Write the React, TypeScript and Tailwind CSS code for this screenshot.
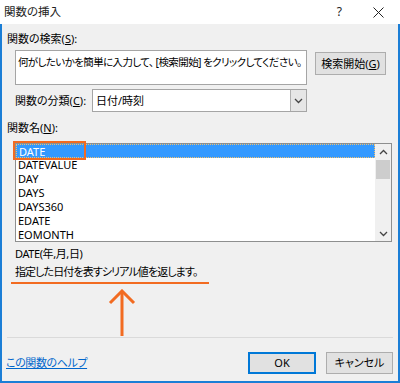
import React from "react";

const functions = ["DATE", "DATEVALUE", "DAY", "DAYS", "DAYS360", "EDATE", "EOMONTH"];

const Chevron: React.FC<{up?: boolean; className?: string}> = ({up, className}) => (
    <svg width="9" height="6" viewBox="0 0 9 6" className={className}>
        <path d={up ? "M1 5 L4.5 1.5 L8 5" : "M1 1 L4.5 4.5 L8 1"} fill="none" stroke="#444" strokeWidth="1.3"/>
    </svg>
);

const App: React.FC = () => {
    return (
        <div
            className="w-[400px] h-[383px] bg-white flex flex-col overflow-hidden text-[11px] text-black leading-[16px] [font-feature-settings:'palt']"
            style={{fontFamily: "'Noto Sans', 'Noto Sans CJK JP', sans-serif"}}
        >
            {/* title bar */}
            <div className="h-[24px] flex items-center pl-[4px] shrink-0">
                <span className="text-[11.5px] text-[#222]">関数の挿入</span>
                <span className="ml-auto mr-[31px] text-[12px] text-[#222]">?</span>
                <svg width="11" height="11" viewBox="0 0 11 11" className="mr-[16px]">
                    <path d="M0.5 0.5 L10.5 10.5 M10.5 0.5 L0.5 10.5" stroke="#222" strokeWidth="1"/>
                </svg>
            </div>

            {/* body */}
            <div className="flex-1 bg-[#f0f0f0] border-x-2 border-b-2 border-[#1b7ed6] pl-[5px] pr-[5px] flex flex-col relative">
                <div className="mt-[7px]">関数の検索(<span className="underline">S</span>):</div>

                <div className="flex mt-[3px] ml-[8px]">
                    <div className="w-[292px] h-[35px] shrink-0 overflow-hidden bg-white border border-[#a5a5a5] px-[2px] pt-[3px] whitespace-nowrap text-[10.5px] tracking-[-0.6px]">
                        何がしたいかを簡単に入力して、 [検索開始] をクリックしてください。
                    </div>
                    <button className="ml-[8px] mt-[2px] w-[71px] h-[23px] shrink-0 bg-[#e1e1e1] border border-[#adadad] flex items-center justify-center whitespace-nowrap">
                        検索開始(<span className="underline">G</span>)
                    </button>
                </div>

                <div className="flex items-center mt-[4px] ml-[8px]">
                    <div className="w-[77px]">関数の分類(<span className="underline">C</span>):</div>
                    <div className="w-[215px] h-[23px] bg-white border border-[#a5a5a5] flex items-center">
                        <span className="pl-[3px] flex-1">日付/時刻</span>
                        <div className="w-[16px] h-full bg-[#e6e6e6] border-l border-[#b0b0b0] flex items-center justify-center">
                            <Chevron/>
                        </div>
                    </div>
                </div>

                <div className="mt-[8px]">関数名(<span className="underline">N</span>):</div>

                <div className="mt-[7px] ml-[8px] w-[377px] h-[99px] bg-white border border-[#8e8f8f] flex relative">
                    <div className="flex-1 flex flex-col">
                        {functions.map((name, i) => (
                            <div
                                key={name}
                                className={`h-[14px] leading-[14px] pl-[2px] ${
                                    i === 0 ? "bg-[#3399ff] text-white border border-dotted border-[#f0c070]" : ""
                                }`}
                            >
                                {name}
                            </div>
                        ))}
                    </div>
                    <div className="w-[16px] bg-[#f0f0f0] flex flex-col items-center">
                        <Chevron up className="mt-[5px]"/>
                        <div className="mt-[5px] w-[14px] h-[19px] bg-[#cdcdcd]"/>
                        <Chevron className="mt-auto mb-[4px]"/>
                    </div>
                    {/* highlight around the selected name */}
                    <div className="absolute left-[-3px] top-[-3px] w-[73px] h-[19px] border-2 border-[#f26b21]"/>
                </div>

                <div className="mt-[4px] ml-[8px] tracking-[-0.4px]">DATE(年,月,日)</div>
                <div className="mt-[2px] ml-[8px] tracking-[-0.9px]">指定した日付を表すシリアル値を返します。</div>
                <div className="mt-[2px] ml-[4px] w-[198px] h-[2px] bg-[#f26b21]"/>

                <svg width="28" height="47" viewBox="0 0 28 47" className="mt-[5px] ml-[101px]">
                    <path d="M14 2 L14 47" stroke="#f26b21" strokeWidth="3"/>
                    <path d="M2 14 L14 2 L26 14" fill="none" stroke="#f26b21" strokeWidth="3"/>
                </svg>

                <div className="h-px bg-[#dadada] mt-[1px]"/>

                <div className="flex items-center mt-[14px]">
                    <span className="ml-[-1px] text-[#0066cc] underline tracking-[-0.4px]">この関数のヘルプ</span>
                    <button className="ml-auto w-[68px] h-[22px] bg-[#e1e1e1] border-2 border-[#0078d7] flex items-center justify-center">
                        OK
                    </button>
                    <button className="ml-[10px] w-[67px] h-[22px] bg-[#e1e1e1] border border-[#adadad] flex items-center justify-center">
                        キャンセル
                    </button>
                </div>
            </div>
        </div>
    );
};

export default App;
